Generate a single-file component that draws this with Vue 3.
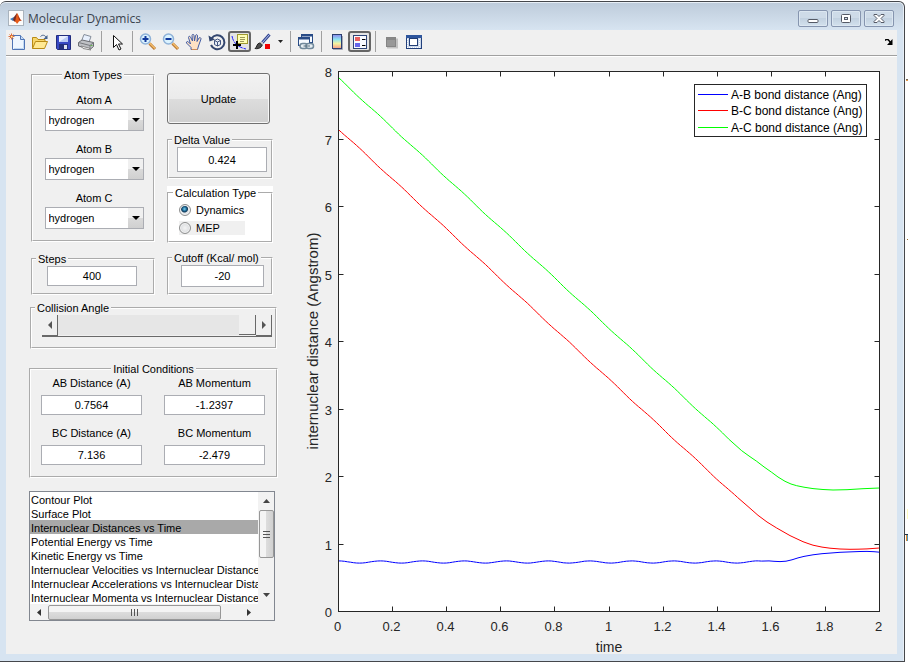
<script setup>
import { ref } from 'vue'

const atoms = ref([
  { id: 'a', label: 'Atom A', value: 'hydrogen' },
  { id: 'b', label: 'Atom B', value: 'hydrogen' },
  { id: 'c', label: 'Atom C', value: 'hydrogen' },
])
const delta = ref('0.424')
const calc = ref('Dynamics')
const steps = ref('400')
const cutoff = ref('-20')
const angle = ref(180)
const conditions = ref([
  { id: 'ab-dist', label: 'AB Distance (A)', value: '0.7564' },
  { id: 'ab-mom', label: 'AB Momentum', value: '-1.2397' },
  { id: 'bc-dist', label: 'BC Distance (A)', value: '7.136' },
  { id: 'bc-mom', label: 'BC Momentum', value: '-2.479' },
])
const plots = [
  'Contour Plot',
  'Surface Plot',
  'Internuclear Distances vs Time',
  'Potential Energy vs Time',
  'Kinetic Energy vs Time',
  'Internuclear Velocities vs Internuclear Distance',
  'Internuclear Accelerations vs Internuclear Distance',
  'Internuclear Momenta vs Internuclear Distance',
]
const plot = ref(plots[2])

// Plot frame inside the 607 x 597 drawing
const L = 48.5
const T = 14.5
const W = 541
const H = 540
const period = 41.9

const xTicks = Array.from({ length: 11 }, (_, i) => ({
  x: Math.round(L + (W * i) / 10 - 0.5) + 0.5,
  label: String(Number((i * 0.2).toFixed(1))),
}))
const yTicks = Array.from({ length: 9 }, (_, i) => ({
  y: Math.round(T + H - (H * i) / 8 - 0.5) + 0.5,
  label: String(i),
}))

// Vibration along the approach, followed by the sampled encounter
function trace(fn, until, tail) {
  const pts = []
  for (let x = 0; x <= until; x += 3) {
    pts.push([L + x, fn(x, Math.cos((2 * Math.PI * x) / period))])
  }
  return pts.concat(tail).map(([x, y]) => x.toFixed(1) + ',' + y.toFixed(1)).join(' ')
}

const series = [
  {
    name: 'A-B bond distance (Ang)',
    color: '#0000ff',
    keyY: 37.5,
    points: trace((x, c) => 505 - 1.1 * c, 425, [
      [479, 503.9], [484, 504.3], [490, 504.6], [496, 504.2], [502, 502.8], [508, 500.9], [514, 499.4],
      [523, 497.8], [532, 496.7], [541, 496], [550, 495.3], [560, 494.9], [570, 494.5], [577, 494.4], [584, 494.7], [589.5, 495.2],
    ]),
  },
  {
    name: 'B-C bond distance (Ang)',
    color: '#ff0000',
    keyY: 53.5,
    points: trace((x, c) => 72.7 + 0.924 * x - 0.5 * (1 - c), 399, [
      [458, 449.5], [468, 458.3], [477, 465], [486.7, 471], [500, 478.6], [507, 481.9], [513, 484.7], [518, 486.5], [523, 488.2],
      [532, 490.1], [540, 491.2], [550, 492], [560, 492.3], [568, 492.2], [577, 491.9], [589.5, 491],
    ]),
  },
  {
    name: 'A-C bond distance (Ang)',
    color: '#00ff00',
    keyY: 70.5,
    points: trace((x, c) => 20.5 + 0.925 * x + 0.5 * (1 - c), 390, [
      [451.7, 393.7], [459, 399], [466.7, 404.3], [474, 409.9], [481.7, 415.3], [488, 420], [495, 424.3], [501, 427],
      [506.7, 428.7], [514, 430.2], [523, 431.6], [533, 432.5], [543, 433], [557, 432.7], [573, 431.7], [589.5, 431],
    ]),
  },
]
</script>

<template>
  <main class="window">
    <header class="titlebar">
      <svg class="logo" viewBox="0 0 16 16" aria-hidden="true">
        <rect x=".5" y=".5" width="15" height="15" fill="#fbfbfb" stroke="#a9b3bd" />
        <path d="M2 9 6 7 8 9 5 11z" fill="#3d78b8" />
        <path d="M6 7 9 3 9 9 7 12 5 10z" fill="#7a2b20" />
        <path d="M9 3c2 2 2 6 5 8-2-1-3 0-5 3-.6-1.500-1.300-2-2-2z" fill="#e65a18" />
        <path d="M10 5c1 2 2 5 4 6l-3-1z" fill="#9b2a16" />
      </svg>
      <h1>Molecular Dynamics</h1>
      <div class="controls">
        <button type="button" aria-label="Minimize">
          <svg viewBox="0 0 14 12"><rect x="2" y="6.500" width="10" height="3" rx="1" fill="#fff" stroke="#555a66" /></svg>
        </button>
        <button type="button" aria-label="Maximize">
          <svg viewBox="0 0 14 12"><rect x="2.500" y="1.500" width="9" height="8" rx="1" fill="#fff" stroke="#555a66" /><rect x="5.500" y="4.500" width="3" height="2" fill="#d4e0ec" stroke="#555a66" /></svg>
        </button>
        <button type="button" aria-label="Close">
          <svg viewBox="0 0 14 12"><path d="M2 1.500h3l2 2 2-2h3v1L9 5.500l3 3v1H9l-2-2-2 2H2v-1l3-3-3-3z" fill="#fff" stroke="#555a66" /></svg>
        </button>
      </div>
    </header>

    <div class="client">
      <nav class="toolbar" aria-label="Figure tools">
        <button type="button" aria-label="New">
          <svg viewBox="0 0 18 18"><path d="M4.500 2.500h8l4 4v10h-12z" fill="#eef6ff" stroke="#4f74b5" /><path d="M12.500 2.500v4h4" fill="#c7dcf5" stroke="#4f74b5" /><path d="M6 15.500h9.500v-8" fill="none" stroke="#c0d8f2" /><path d="M3.500.5v6M.5 3.500h6M1.500 1.500l4 4M5.500 1.500l-4 4" stroke="#e0703c" /><rect x="3" y="3" width="1.500" height="1.500" fill="#fff3a0" /></svg>
        </button>
        <button type="button" aria-label="Open">
          <svg viewBox="0 0 18 18"><path d="M1.500 15.500v-11h4l1.500 2h7v3" fill="#f7d66a" stroke="#b88a14" /><path d="M1.500 15.500 4.500 8.500h12l-3 7z" fill="#ffe993" stroke="#b88a14" /><path d="M9.500 3.500c2-2 4-1.500 5.500.5" fill="none" stroke="#43618b" /><path d="M16.500 2v4h-4z" fill="#43618b" /></svg>
        </button>
        <button type="button" aria-label="Save">
          <svg viewBox="0 0 18 18"><path d="M2.500 2.500h14v14h-13l-1-1z" fill="#3849c4" stroke="#222c7d" /><rect x="5" y="3" width="9" height="6" fill="#e9efff" /><path d="M5 9 14 3v6z" fill="#b9c9f5" /><rect x="5" y="11" width="9" height="5" fill="#25307c" /><rect x="10" y="12" width="3" height="4" fill="#dfe4f1" /></svg>
        </button>
        <button type="button" aria-label="Print">
          <svg viewBox="0 0 18 18"><path d="M4.500 8 7 1.500l7 2L12 9z" fill="#e7effc" stroke="#858d9a" /><path d="M1.500 9.500 5 7l11.500 2.500v4L13 16.500 1.500 13z" fill="#bfc1c5" stroke="#6b6d72" /><path d="M1.500 9.500 13 12.500l3.500-3M13 12.500v4" fill="none" stroke="#77797d" /><path d="M4 13l8 2 2 2-8-1.500z" fill="#f4f4f4" stroke="#888" /><rect x="13.500" y="12" width="2" height="1" fill="#63b94b" /></svg>
        </button>
        <i class="sep"></i>
        <button type="button" aria-label="Edit plot">
          <svg viewBox="0 0 18 18"><path d="M5.500 2.500v12l3-3 2.500 5.500 2-1-2.500-5h4z" fill="#fff" stroke="#111" /></svg>
        </button>
        <i class="sep"></i>
        <button type="button" aria-label="Zoom in">
          <svg viewBox="0 0 18 18"><path d="m10.500 10.500 5.500 5.500" stroke="#b87531" stroke-width="3" /><path d="m10.500 10 5.500 5.500" stroke="#f2bd6b" stroke-width="1.500" /><circle cx="6.500" cy="6" r="5" fill="#dcf3ff" stroke="#8fb2d8" stroke-width="1.500" /><path d="M3.500 6h6M6.500 3v6" stroke="#133a9c" stroke-width="2" /></svg>
        </button>
        <button type="button" aria-label="Zoom out">
          <svg viewBox="0 0 18 18"><path d="m10.500 10.500 5.500 5.500" stroke="#b87531" stroke-width="3" /><path d="m10.500 10 5.500 5.500" stroke="#f2bd6b" stroke-width="1.500" /><circle cx="6.500" cy="6" r="5" fill="#dcf3ff" stroke="#8fb2d8" stroke-width="1.500" /><path d="M3.500 6h6" stroke="#133a9c" stroke-width="2" /></svg>
        </button>
        <button type="button" aria-label="Pan">
          <svg viewBox="0 0 18 18"><path d="M6 16.500v-2L1.500 10c-.5-1.500 1-2 2-1L5.500 11 3.500 4.500c0-1.500 1.500-1.500 2-.5L7.500 8 7 2.500c0-1.500 2-1.500 2 0L9.500 8l1-5.500c.5-1.300 2-1 2 .5L12 8.500l2-3.500c1-1 2.200 0 2 1l-2.500 7-1 3.500z" fill="#ffe2c4" stroke="#3f5ba5" /><path d="M6.500 16.500h6" stroke="#c98b5a" /></svg>
        </button>
        <button type="button" aria-label="Rotate 3D">
          <svg viewBox="0 0 18 18"><path d="M3.500 5.500A7 7 0 1 1 3 12" fill="none" stroke="#33466f" stroke-width="2" /><path d="M.5 2.500 1.500 8.500l5.500-2z" fill="#33466f" /><path d="m6.500 7.500 3-1.500 3 1.500v4l-3 1.500-3-1.500zM6.500 7.500l3 1.500 3-1.500M9.500 9v4" fill="#e5ecf7" stroke="#425580" /></svg>
        </button>
        <button type="button" class="pressed" aria-label="Data cursor" aria-pressed="true">
          <svg viewBox="0 0 18 18"><path d="M1 3c1 6 5 11 14 13" fill="none" stroke="#2020ff" stroke-dasharray="5 1" /><rect x="6.500" y="1.500" width="10" height="9" fill="#ffffb5" stroke="#a19b2f" /><path d="M9 4.500h5M9 6.500h5M9 8.500h4" stroke="#9d9959" /><path d="M2 12h8M6 8v8" stroke="#000" stroke-width="2" /></svg>
        </button>
        <button type="button" aria-label="Brush data">
          <svg viewBox="0 0 18 18"><path d="m8 10 7.500-8.500" stroke="#33458f" stroke-width="3" /><path d="m8.500 9.500 7-8" stroke="#b5c5f0" /><path d="M1 15.500c2-1 1.500-5 4.500-5.500 3 0 3.500 2.500 1.500 4-1.500 1.500-4 2-6 1.500z" fill="#4b4b4b" stroke="#222" /><path d="m7 9 2 2" stroke="#ccc" stroke-width="2" /><rect x="11" y="11" width="5" height="5" fill="#f00000" /></svg>
        </button>
        <button type="button" class="caret" aria-label="Brush options">
          <svg viewBox="0 0 5 3"><path d="M0 0h5L2.500 3z" fill="#222" /></svg>
        </button>
        <i class="sep"></i>
        <button type="button" aria-label="Link plot">
          <svg viewBox="0 0 18 18"><rect x="4.500" y="1.500" width="11" height="8" fill="#f6faff" stroke="#294b86" /><path d="M4 2.500h12" stroke="#294b86" stroke-width="2" /><rect x="1.500" y="4.500" width="11" height="8" fill="#f6faff" stroke="#294b86" /><path d="M1 5.500h12" stroke="#294b86" stroke-width="2" /><rect x="3" y="10.500" width="7.500" height="5" rx="2.500" fill="#e5edf2" stroke="#71899b" stroke-width="1.500" /><rect x="9" y="10.500" width="7.500" height="5" rx="2.500" fill="#e5edf2" stroke="#71899b" stroke-width="1.500" /><path d="M6.500 13h6.500" stroke="#536b7b" /></svg>
        </button>
        <i class="sep"></i>
        <button type="button" aria-label="Insert colorbar">
          <svg viewBox="0 0 18 18"><defs><linearGradient id="bar" x1="0" y1="0" x2="0" y2="1"><stop offset="0" stop-color="#8c86ee" /><stop offset=".35" stop-color="#8ee5f2" /><stop offset=".65" stop-color="#f5f3a0" /><stop offset="1" stop-color="#f79a88" /></linearGradient></defs><rect x="4.500" y="1.500" width="9" height="14" fill="url(#bar)" stroke="#2b3f70" /><path d="M5 16.500h9.500V3" fill="none" stroke="#a5a9b5" /></svg>
        </button>
        <button type="button" class="pressed" aria-label="Insert legend" aria-pressed="true">
          <svg viewBox="0 0 18 18"><rect x="2.500" y="2.500" width="13" height="13" fill="#f8faff" stroke="#2d4477" /><rect x="4" y="4" width="5" height="4" fill="#e86060" /><rect x="4" y="10" width="5" height="4" fill="#6565ec" /><path d="M11 6.500h3.500M11 12.500h3.500" stroke="#000" /></svg>
        </button>
        <i class="sep"></i>
        <button type="button" aria-label="Hide plot tools">
          <svg viewBox="0 0 18 18"><path d="M5 14.500h10v-9" fill="none" stroke="#c2c2c2" stroke-width="2" /><rect x="4.500" y="4.500" width="9" height="9" fill="#989898" stroke="#858585" /><path d="M5 6h8" stroke="#777" /></svg>
        </button>
        <button type="button" aria-label="Show plot tools">
          <svg viewBox="0 0 18 18"><rect x="1.500" y="2.500" width="15" height="13" fill="#cbd8eb" stroke="#22407c" /><path d="M1 3.500h16" stroke="#2f569d" stroke-width="3" /><rect x="4.500" y="5.500" width="8" height="7" fill="#fff" stroke="#223e76" /><path d="M2.500 6v9M14.500 6v9M4 14.500h10" stroke="#fff" stroke-dasharray="1 1" /></svg>
        </button>
        <button type="button" class="dock" aria-label="Dock figure">
          <svg viewBox="0 0 8 6"><path d="M0 1.500 1 .5h2L6 4" fill="none" stroke="#000" stroke-width="1.500" /><path d="M7.500 0v6H2z" fill="#000" /></svg>
        </button>
      </nav>

      <div class="body">
        <form class="side" @submit.prevent>
          <div class="columns">
            <div class="left">
              <fieldset class="atoms">
                <legend>Atom Types</legend>
                <div v-for="a in atoms" :key="a.id" class="atom">
                  <label :for="'atom-' + a.id">{{ a.label }}</label>
                  <span class="drop">
                    <select :id="'atom-' + a.id" v-model="a.value">
                      <option>hydrogen</option>
                    </select>
                    <span class="arrow"></span>
                  </span>
                </div>
              </fieldset>
              <fieldset class="steps">
                <legend id="steps-name">Steps</legend>
                <input v-model="steps" type="text" aria-labelledby="steps-name" />
              </fieldset>
            </div>
            <div class="right">
              <button type="button" class="update">Update</button>
              <fieldset class="delta">
                <legend id="delta-name">Delta Value</legend>
                <input v-model="delta" type="text" aria-labelledby="delta-name" />
              </fieldset>
              <div class="calc">
                <fieldset>
                  <legend>Calculation Type</legend>
                  <label><input v-model="calc" type="radio" name="calc" value="Dynamics" />Dynamics</label>
                  <label class="tinted"><input v-model="calc" type="radio" name="calc" value="MEP" />MEP</label>
                </fieldset>
              </div>
              <fieldset class="cutoff">
                <legend id="cutoff-name">Cutoff (Kcal/ mol)</legend>
                <input v-model="cutoff" type="text" aria-labelledby="cutoff-name" />
              </fieldset>
            </div>
          </div>

          <fieldset class="angle">
            <legend id="angle-name">Collision Angle</legend>
            <div class="slider">
              <button type="button" aria-label="Decrease"><svg viewBox="0 0 4 8"><path d="M4 0v8L0 4z" fill="#555" /></svg></button>
              <input v-model="angle" type="range" min="0" max="180" aria-labelledby="angle-name" />
              <button type="button" aria-label="Increase"><svg viewBox="0 0 4 8"><path d="M0 0v8l4-4z" fill="#555" /></svg></button>
            </div>
          </fieldset>

          <fieldset class="initial">
            <legend>Initial Conditions</legend>
            <div class="pairs">
              <div v-for="c in conditions" :key="c.id" class="pair">
                <label :for="c.id">{{ c.label }}</label>
                <input :id="c.id" v-model="c.value" type="text" />
              </div>
            </div>
          </fieldset>

          <div class="listbox">
            <select v-model="plot" size="8" aria-label="Plot type">
              <option v-for="p in plots" :key="p" :value="p">{{ p }}</option>
            </select>
            <div class="vbar" aria-hidden="true">
              <svg viewBox="0 0 7 4"><path d="M0 4h7L3.500 0z" fill="#444" /></svg>
              <span class="thumb"><i></i><i></i><i></i></span>
              <svg viewBox="0 0 7 4"><path d="M0 0h7L3.500 4z" fill="#444" /></svg>
            </div>
            <div class="hbar" aria-hidden="true">
              <svg viewBox="0 0 4 7"><path d="M4 0v7L0 3.500z" fill="#333" /></svg>
              <span class="thumb"><i></i><i></i><i></i></span>
              <svg viewBox="0 0 4 7"><path d="M0 0v7l4-3.500z" fill="#333" /></svg>
            </div>
          </div>
        </form>

        <svg class="chart" viewBox="0 0 607 597" role="img" aria-label="Internuclear distance against time">
          <rect :x="L" :y="T" :width="W" :height="H" fill="#fff" />
          <polyline v-for="s in series" :key="s.name" :points="s.points" :stroke="s.color" fill="none" />
          <g stroke="#262626" fill="none">
            <rect :x="L" :y="T" :width="W" :height="H" />
            <path v-for="t in xTicks" :key="t.x" :d="`M${t.x} ${T + H}v-5M${t.x} ${T}v5`" />
            <path v-for="t in yTicks" :key="t.y" :d="`M${L} ${t.y}h5M${L + W} ${t.y}h-5`" />
          </g>
          <g class="tick">
            <text v-for="t in xTicks" :key="t.x" :x="t.x - 1" y="574" text-anchor="middle">{{ t.label }}</text>
            <text v-for="t in yTicks" :key="t.y" x="42" :y="t.y + 5" text-anchor="end">{{ t.label }}</text>
          </g>
          <text class="axis" x="319" y="595" text-anchor="middle">time</text>
          <text class="axis axis-y" transform="translate(28 284) rotate(-90)" text-anchor="middle">internuclear distance (Angstrom)</text>
          <rect x="404.500" y="27.500" width="172" height="52" fill="#fff" stroke="#262626" />
          <g v-for="s in series" :key="s.name">
            <path :d="`M408 ${s.keyY}h30`" :stroke="s.color" />
            <text class="key" x="441" :y="s.keyY + 4.5">{{ s.name }}</text>
          </g>
        </svg>
      </div>
    </div>
    <svg class="beyond" viewBox="0 0 3 463" aria-hidden="true">
      <path d="M1 .5h2" stroke="#7a6a55" />
      <path d="M1 1.500h2" stroke="#e09a50" />
      <path d="M2 160.500h1" stroke="#9a7030" />
      <path d="M2.500 430v10" stroke="#fdfbc0" />
      <path d="M0 455.500h3" stroke="#1f3348" />
      <path d="M1.500 456v6" stroke="#e58a28" />
      <path d="M2.500 456v6" stroke="#4d93bd" />
    </svg>
  </main>
</template>

<style>
body {
  background: #fff;
}
</style>

<style scoped>
.window {
  position: relative;
  margin: 1px 3px 0 0;
  padding: 0 7px 7px 6px;
  border: solid #45474b;
  border-width: 1px 1px 1px 0;
  border-radius: 6px 6px 0 0;
  background: #d7e4f1 linear-gradient(#bdcbda, #d7e4f1) top / 100% 28px no-repeat;
  box-shadow: inset 0 1px #e8eff6, inset -1px 0 #e8eff6;
  font: 11px/14px "Liberation Sans", Arial, sans-serif;
  color: #000;
}
.beyond {
  position: absolute;
  top: 77px;
  left: calc(100% + 1px);
  width: 3px;
  height: 463px;
}
button,
input,
select {
  box-sizing: border-box;
  margin: 0;
  padding: 0;
  font: inherit;
  color: inherit;
}
.titlebar {
  display: flex;
  align-items: center;
  height: 28px;
  padding: 0 3px 0 2px;
}
.logo {
  width: 16px;
  height: 16px;
  margin-top: 4px;
}
h1 {
  flex: 1;
  margin: 5px 0 0 4px;
  font: 12px/16px "Open Sans", "Noto Sans", sans-serif;
  color: #3b434d;
}
.controls {
  display: flex;
  gap: 3px;
  margin-top: 5px;
}
.controls button {
  display: grid;
  place-items: center;
  width: 30px;
  height: 17px;
  border: 1px solid #8695af;
  border-radius: 2px;
  background: linear-gradient(#cedbe8 50%, #c2d1e0 50%, #d3e1ed);
  box-shadow: inset 0 0 0 1px #dce7f1;
}
.controls svg {
  width: 14px;
  height: 12px;
}
.client {
  background: #f0f0f0;
}
.toolbar {
  display: flex;
  align-items: center;
  height: 23px;
  padding-bottom: 2px;
  border-bottom: 1px solid #a0a0a0;
  box-shadow: 0 1px #fff;
}
.toolbar button {
  display: grid;
  place-items: center;
  width: 23px;
  height: 21px;
  border: 0;
  border-radius: 3px;
  background: none;
}
.toolbar button:first-child {
  width: 22px;
}
.toolbar svg {
  width: 18px;
  height: 18px;
}
.toolbar .pressed {
  border: 2px solid #666;
  background: #e4e4e4;
}
.toolbar .caret {
  width: 12px;
}
.toolbar .caret svg {
  width: 5px;
  height: 3px;
}
.toolbar .dock {
  width: 16px;
  margin-left: auto;
}
.toolbar .dock svg {
  width: 8px;
  height: 6px;
}
.sep {
  width: 1px;
  height: 21px;
  margin: 0 3px 0 4px;
  background: #a0a0a0;
}
.body {
  display: flex;
  align-items: flex-start;
  padding-top: 1px;
}
.side {
  flex: none;
  width: 249px;
  margin: 11px 12px 0 23px;
}
.chart {
  flex: 1;
  min-width: 0;
  display: block;
}
.columns {
  display: flex;
  gap: 12px;
  margin-left: 2px;
}
.left {
  width: 124px;
}
.right {
  width: 106px;
  padding-top: 5px;
}
fieldset {
  box-sizing: border-box;
  min-width: 0;
  margin: 0;
  padding: 0;
  border: 2px groove #fff;
}
legend {
  margin-left: 3px;
  padding: 0 2px;
}
input[type="text"] {
  display: block;
  width: 90px;
  height: 20px;
  border: 1px solid #abadb3;
  background: #fff;
  text-align: center;
}
.atoms {
  height: 174px;
}
.atoms legend,
.initial legend {
  margin: 0 auto;
}
.atom {
  display: flex;
  flex-direction: column;
  align-items: center;
  gap: 2px;
  padding: 11px 0 0 2px;
}
.drop {
  position: relative;
  display: block;
}
.drop select {
  display: block;
  width: 99px;
  height: 22px;
  padding-left: 3px;
  appearance: none;
  border: 1px solid #abadb3;
  border-radius: 0;
  background: #fff;
}
.arrow {
  position: absolute;
  inset: 1px 1px 1px auto;
  width: 15px;
  background: linear-gradient(#f0f0f0 50%, #dadada 50%, #d0d0d0);
  pointer-events: none;
}
.arrow::after {
  content: "";
  display: block;
  margin: 8px 0 0 4px;
  width: 0;
  border: solid transparent;
  border-width: 4px 4px 0;
  border-top-color: #000;
}
.steps {
  height: 43px;
  margin-top: 10px;
}
.steps input {
  margin: 0 14px;
}
.update {
  display: block;
  width: 103px;
  height: 51px;
  border: 1px solid #707070;
  border-radius: 3px;
  background: linear-gradient(#f2f2f2, #ebebeb 50%, #dddddd 50%, #cfcfcf);
  box-shadow: inset 0 0 0 1px #f6f6f6;
}
.delta {
  height: 46px;
  margin-top: 9px;
}
.delta input {
  height: 25px;
  margin-left: 8px;
}
.calc {
  margin-top: 7px;
  background: #fff;
}
.calc fieldset {
  height: 57px;
  padding-left: 10px;
}
.calc legend {
  margin-left: -6px;
}
.calc label {
  display: flex;
  align-items: center;
  gap: 5px;
  width: 66px;
  height: 14px;
  margin-top: 4px;
}
.calc legend + label {
  margin-top: 3px;
}
.calc .tinted {
  background: #f0f0f0;
}
.calc input {
  flex: none;
  width: 12px;
  height: 12px;
  appearance: none;
  border: 1px solid #8e8f8f;
  border-radius: 50%;
  background: radial-gradient(#f4f4f4, #cfd2d5);
  box-shadow: inset 0 0 0 1px #f4f4f4;
}
.calc input:checked {
  background: radial-gradient(circle at 45% 40%, #7fd4f4 0, #1e6a96 2px, #123a5a 3px, #e4e7ea 4px);
}
.cutoff {
  height: 44px;
  margin-top: 8px;
}
.cutoff input {
  width: 83px;
  height: 22px;
  margin-left: 12px;
}
.angle {
  height: 48px;
  margin: 6px 1px 0;
}
.slider {
  display: flex;
  width: 230px;
  height: 21px;
  margin-left: 10px;
  border-bottom: 1px solid #696969;
}
.slider button {
  display: grid;
  place-items: center;
  width: 16px;
  border: solid #696969;
  border-width: 0 1px 1px 0;
  background: #f0f0f0;
}
.slider svg {
  width: 4px;
  height: 8px;
}
.slider input {
  flex: 1;
  min-width: 0;
  height: 20px;
  appearance: none;
  background: #e6e6e6;
}
.slider input::-webkit-slider-thumb {
  appearance: none;
  box-sizing: border-box;
  width: 17px;
  height: 20px;
  border: solid #696969;
  border-width: 0 1px 1px 0;
  background: #f0f0f0;
}
.initial {
  height: 116px;
  margin-top: 13px;
}
.pairs {
  display: grid;
  grid-template-columns: 101px 101px;
  gap: 11px 22px;
  padding-left: 10px;
}
.pair {
  text-align: center;
}
.pair label {
  display: block;
  margin-bottom: 5px;
}
.pair input {
  width: 100%;
}
.listbox {
  display: grid;
  grid-template: 112px 16px / 1fr 16px;
  width: 244px;
  margin-top: 13px;
  border: 1px solid #828790;
  background: #f2f2f2;
}
.listbox select {
  width: 100%;
  height: 112px;
  min-width: 0;
  border: 0;
  border-radius: 0;
  outline: 0;
  background: #fff;
  overflow: hidden;
  scrollbar-width: none;
}
.listbox option {
  box-sizing: border-box;
  min-height: 14px;
  height: 14px;
  padding: 2px 1px 0;
  line-height: 12px;
  color: #000;
}
.listbox option:checked {
  background: #a9a9a9 linear-gradient(#a9a9a9, #a9a9a9);
  color: #000 !important;
}
.vbar,
.hbar {
  display: flex;
  align-items: center;
  justify-content: flex-start;
}
.vbar {
  flex-direction: column;
  padding: 7px 0;
}
.vbar svg {
  width: 7px;
  height: 4px;
}
.vbar svg:last-child {
  margin-top: auto;
}
.hbar {
  padding: 0 7px;
}
.hbar svg {
  width: 4px;
  height: 7px;
}
.hbar svg:last-child {
  margin-left: auto;
}
.thumb {
  box-sizing: border-box;
  display: flex;
  align-items: center;
  justify-content: center;
  gap: 2px;
  border: 1px solid #979797;
  border-radius: 2px;
}
.vbar .thumb {
  flex-direction: column;
  width: 15px;
  height: 48px;
  margin-top: 7px;
  background: linear-gradient(90deg, #f4f4f4 50%, #dcdcdc 50%, #d0d0d0);
}
.hbar .thumb {
  width: 173px;
  height: 15px;
  margin-left: 7px;
  background: linear-gradient(#f4f4f4 50%, #dcdcdc 50%, #d0d0d0);
}
.vbar i {
  width: 7px;
  height: 1px;
  background: #555;
}
.hbar i {
  width: 1px;
  height: 7px;
  background: #555;
}
.tick {
  font-size: 13px;
  fill: #262626;
}
.axis {
  font-size: 14px;
  fill: #262626;
}
.axis-y {
  font-size: 15px;
}
.key {
  font-size: 12px;
  fill: #000;
}
</style>
